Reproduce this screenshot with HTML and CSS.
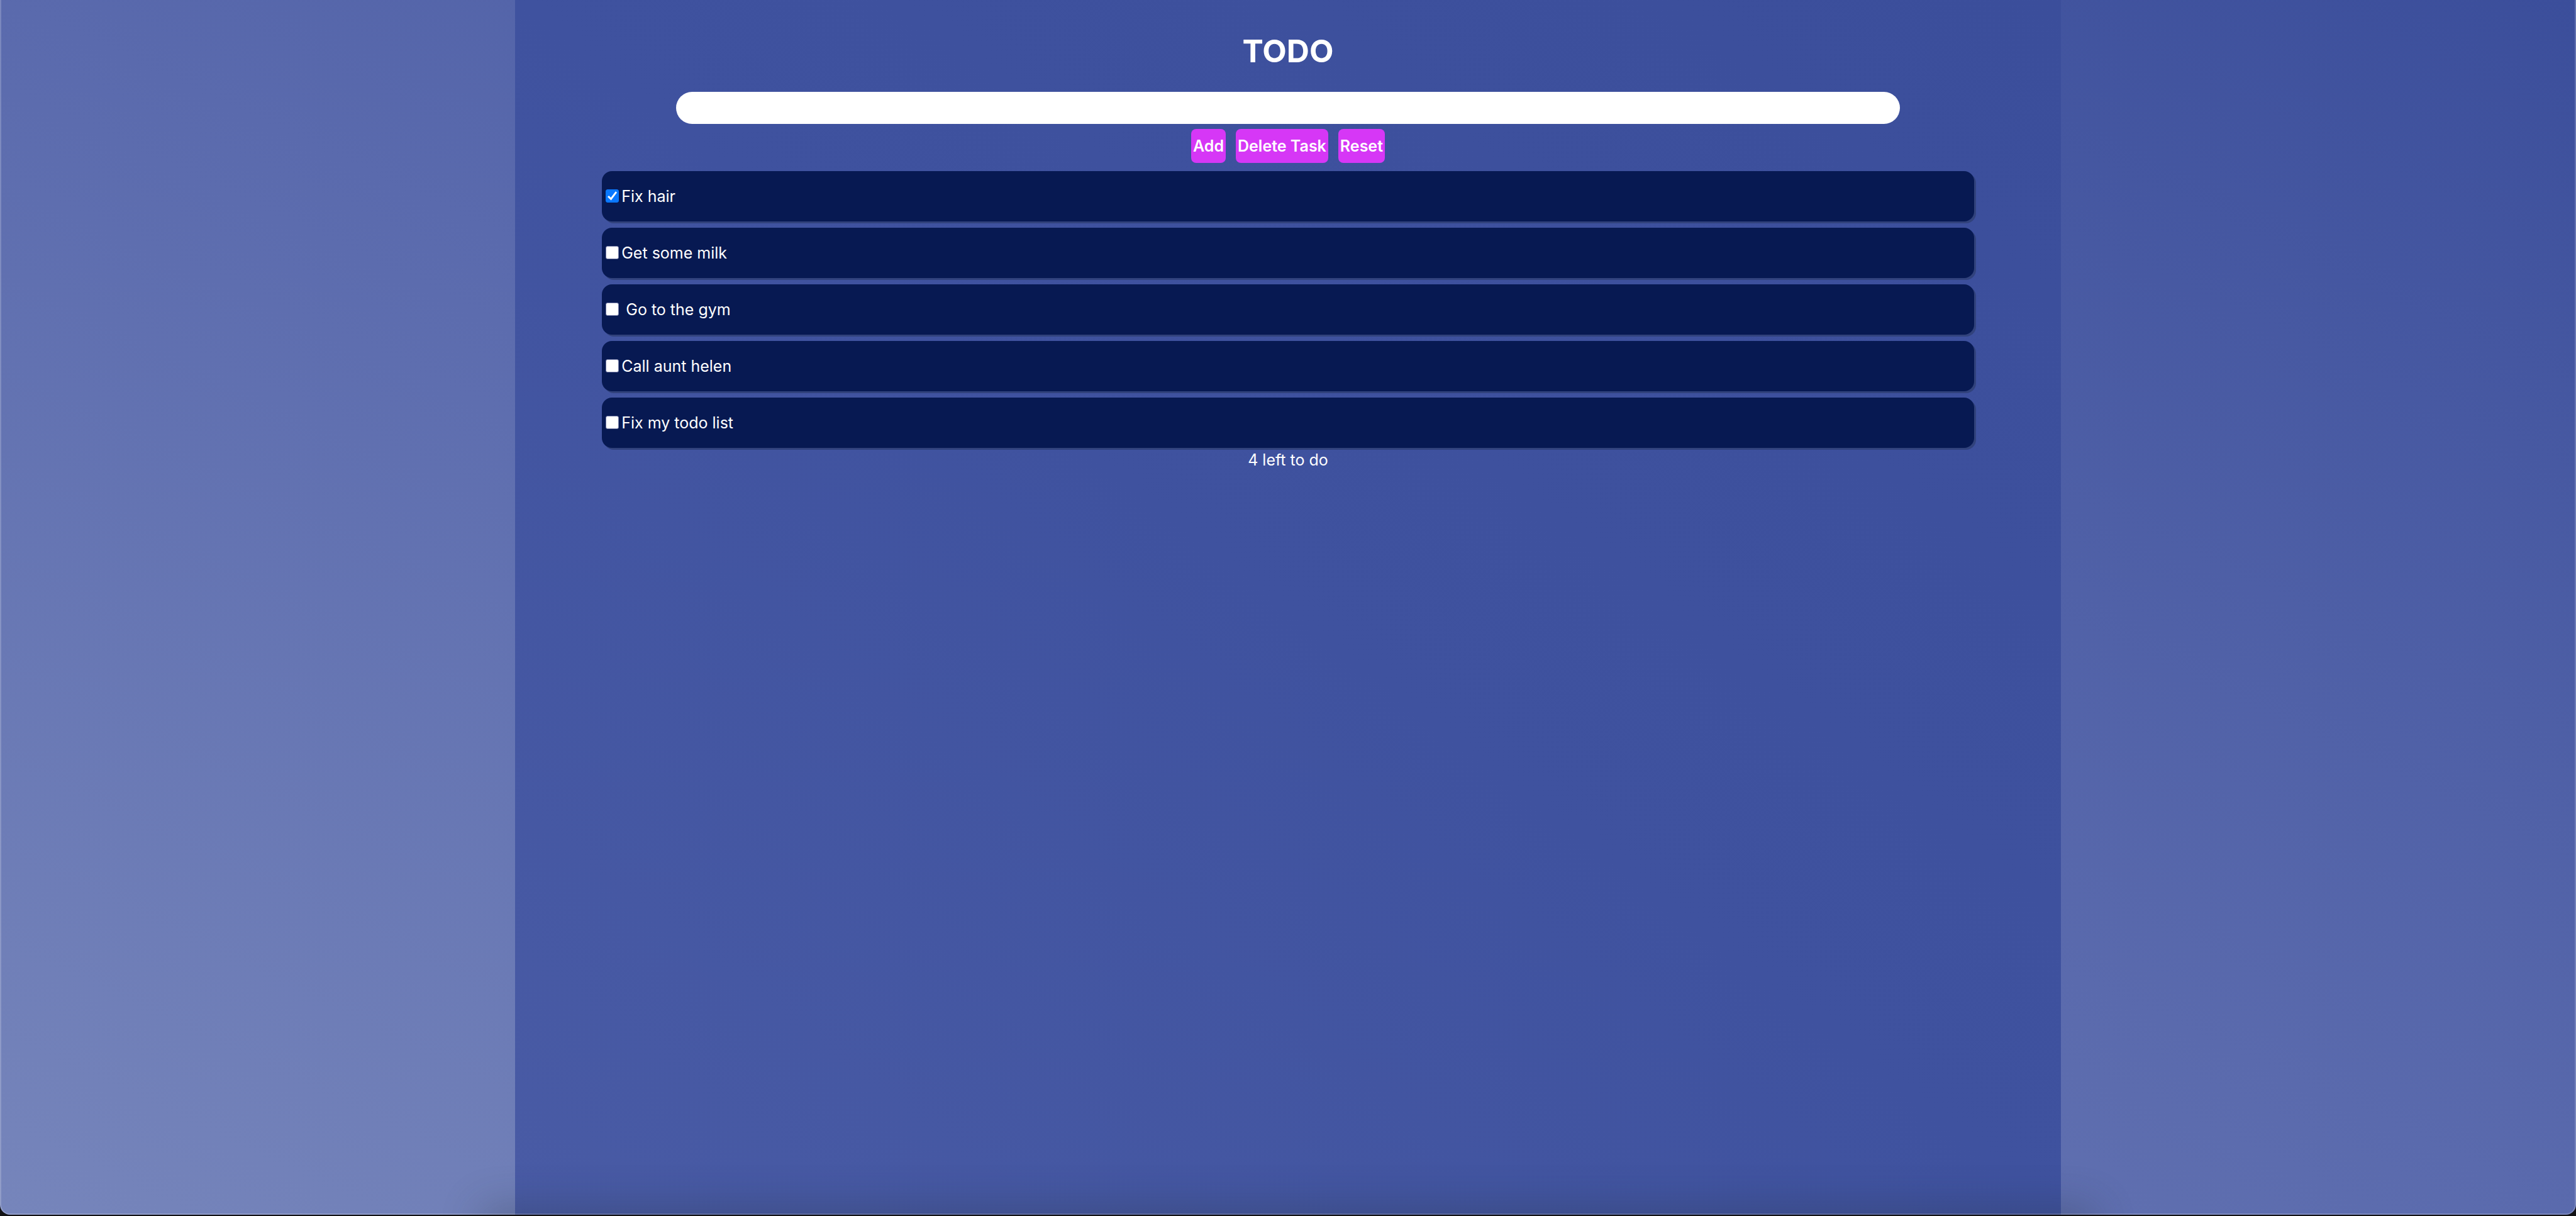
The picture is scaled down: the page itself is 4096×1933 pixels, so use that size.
FILE: index.html
```html
<!DOCTYPE html>
<html lang="en">
<head>
<meta charset="utf-8">
<title>TODO</title>
<link rel="stylesheet" href="styles.css">
</head>
<body>
<div class="window">
  <main class="panel">
    <h1 class="title">TODO</h1>
    <form class="entry">
      <input class="entry-text" type="text" aria-label="New task">
      <div class="actions">
        <button class="action" type="button">Add</button>
        <button class="action" type="button">Delete Task</button>
        <button class="action" type="button">Reset</button>
      </div>
    </form>
    <ul class="tasks">
      <li class="task"><input class="tick" type="checkbox" id="t1" checked><label class="name" for="t1">Fix hair</label></li>
      <li class="task"><input class="tick" type="checkbox" id="t2"><label class="name" for="t2">Get some milk</label></li>
      <li class="task"><input class="tick" type="checkbox" id="t3"><label class="name" for="t3"> Go to the gym</label></li>
      <li class="task"><input class="tick" type="checkbox" id="t4"><label class="name" for="t4">Call aunt helen</label></li>
      <li class="task"><input class="tick" type="checkbox" id="t5"><label class="name" for="t5">Fix my todo list</label></li>
    </ul>
    <p class="left">4 left to do</p>
  </main>
</div>
</body>
</html>
```
FILE: styles.css
```css
* { box-sizing: border-box; }

body {
  margin: 0;
  padding-bottom: 2px;
  min-height: 100vh;
  display: flex;
  background: #121214;
  color: #fff;
  font: 25px/32px Inter, sans-serif;
}

.window {
  flex: 1;
  position: relative;
  display: flex;
  justify-content: center;
  overflow: hidden;
  border-radius: 0 0 16px 16px;
  background: linear-gradient(to top right, #7685bb, #5a6aad 50%, #3b4e9b);
}

/* Light window edge and the dock's shade along the bottom */
.window::before {
  content: "";
  position: absolute;
  inset: -2px 0 0;
  border: 2px solid rgba(255, 255, 255, 0.2);
  border-radius: 0 0 16px 16px;
  pointer-events: none;
}

.window::after {
  content: "";
  position: absolute;
  top: 100%;
  left: 19%;
  right: 19%;
  height: 40px;
  box-shadow: 0 0 64px 12px rgba(40, 50, 60, 0.3);
  pointer-events: none;
}

.panel {
  width: 60%;
  padding-top: 49px;
  display: flex;
  flex-direction: column;
  background: linear-gradient(to top right, #495ba5, #3f529f 50%, #3b4e9b);
}

.title {
  margin: 0 0 33px;
  font-size: 50px;
  line-height: 64px;
  font-weight: 700;
  text-align: center;
}

.entry {
  display: flex;
  flex-direction: column;
  align-items: center;
  gap: 8px;
}

.entry-text {
  width: 1946px;
  max-width: 90%;
  height: 51px;
  padding: 0 24px;
  border: 0;
  border-radius: 26px;
  background: #fff;
  color: #111;
  font: inherit;
}

.actions {
  display: flex;
  gap: 16px;
}

.action {
  height: 54px;
  padding: 0 3px;
  border: 0;
  border-radius: 8px;
  background: #d637f6;
  color: #fff;
  font: 600 25px/32px Inter, sans-serif;
}

.tasks {
  margin: 13px 138px 0;
  padding: 0;
  list-style: none;
  display: grid;
  gap: 10px;
}

.task {
  height: 80px;
  padding-left: 6px;
  display: flex;
  align-items: center;
  gap: 4px;
  border-radius: 16px;
  background: #071952;
  box-shadow: 3px 3px 0 #31427c;
}

.tick {
  appearance: none;
  width: 21px;
  height: 21px;
  margin: 0 0 2px;
  border: 1px solid #737aa6;
  border-radius: 3px;
  background: #fff;
}

.tick:checked {
  border-color: #0a78ff;
  background: #0a78ff url("data:image/svg+xml,%3Csvg xmlns='http://www.w3.org/2000/svg' viewBox='0 0 26 26'%3E%3Cpath d='M5 13.500L10.500 19L21 5' fill='none' stroke='white' stroke-width='3.600'/%3E%3C/svg%3E") center / 21px;
}

.name { white-space: pre; }

.left {
  margin: 3px 0 0;
  text-align: center;
}
```
